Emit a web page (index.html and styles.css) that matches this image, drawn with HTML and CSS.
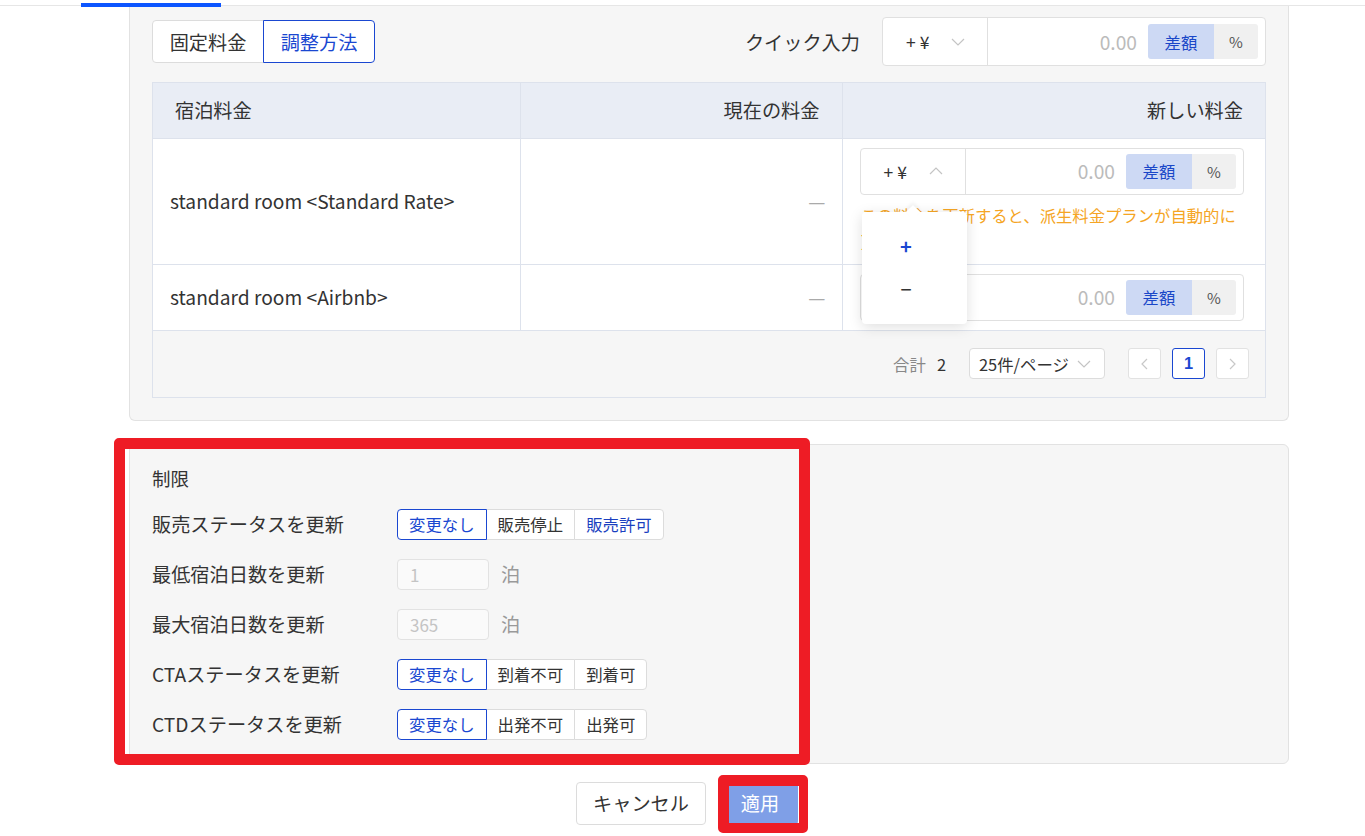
FILE: index.html
```html
<!DOCTYPE html>
<html lang="ja">
<head>
    <meta charset="UTF-8">
    <meta name="viewport" content="width=device-width, initial-scale=1.0">
    <title>料金の一括編集</title>
    <link rel="stylesheet" href="styles.css">
</head>
<body>
    <div class="topnav"><span class="topnav-ink"></span></div>

    <div class="page">
        <!-- Rates -->
        <section class="card card-rates">
            <div class="toolbar">
                <div class="seg seg-lg">
                    <button class="seg-item">固定料金</button>
                    <button class="seg-item is-active">調整方法</button>
                </div>
                <div class="quick">
                    <span class="quick-label">クイック入力</span>
                    <div class="adjust adjust-quick">
                        <div class="adjust-sign">
                            <span>+ ¥</span>
                            <svg class="chev" width="14" height="8" viewBox="0 0 14 8"><polyline points="1,1 7,7 13,1" fill="none" stroke="#c4c4c4" stroke-width="1.2"/></svg>
                        </div>
                        <div class="adjust-value">0.00</div>
                        <div class="unit">
                            <span class="unit-diff">差額</span>
                            <span class="unit-pct">%</span>
                        </div>
                    </div>
                </div>
            </div>

            <div class="rate-grid">
                <table class="rate-table">
                    <colgroup>
                        <col class="col-name">
                        <col class="col-current">
                        <col class="col-new">
                    </colgroup>
                    <thead>
                        <tr>
                            <th>宿泊料金</th>
                            <th class="num">現在の料金</th>
                            <th class="num">新しい料金</th>
                        </tr>
                    </thead>
                    <tbody>
                        <tr>
                            <td class="cell-name">standard room &lt;Standard Rate&gt;</td>
                            <td class="cell-current">—</td>
                            <td class="cell-new">
                                <div class="adjust">
                                    <div class="adjust-sign">
                                        <span>+ ¥</span>
                                        <svg class="chev" width="14" height="8" viewBox="0 0 14 8"><polyline points="1,7 7,1 13,7" fill="none" stroke="#c4c4c4" stroke-width="1.2"/></svg>
                                    </div>
                                    <div class="adjust-value">0.00</div>
                                    <div class="unit">
                                        <span class="unit-diff">差額</span>
                                        <span class="unit-pct">%</span>
                                    </div>
                                    <!-- open sign menu -->
                                    <ul class="sign-menu">
                                        <li class="is-selected">+</li>
                                        <li>−</li>
                                    </ul>
                                </div>
                                <p class="warn">この料金を更新すると、派生料金プランが自動的に更新されます。</p>
                            </td>
                        </tr>
                        <tr>
                            <td class="cell-name">standard room &lt;Airbnb&gt;</td>
                            <td class="cell-current">—</td>
                            <td class="cell-new">
                                <div class="adjust">
                                    <div class="adjust-sign">
                                        <span>+ ¥</span>
                                        <svg class="chev" width="14" height="8" viewBox="0 0 14 8"><polyline points="1,1 7,7 13,1" fill="none" stroke="#c4c4c4" stroke-width="1.2"/></svg>
                                    </div>
                                    <div class="adjust-value">0.00</div>
                                    <div class="unit">
                                        <span class="unit-diff">差額</span>
                                        <span class="unit-pct">%</span>
                                    </div>
                                </div>
                            </td>
                        </tr>
                    </tbody>
                </table>

                <div class="pager">
                    <span class="pager-total">合計</span>
                    <span class="pager-count">2</span>
                    <div class="pager-size">
                        <span>25件/ページ</span>
                        <svg width="14" height="8" viewBox="0 0 14 8"><polyline points="1,1 7,7 13,1" fill="none" stroke="#c4c4c4" stroke-width="1.2"/></svg>
                    </div>
                    <button class="pager-btn">
                        <svg width="7" height="12" viewBox="0 0 7 12"><polyline points="6,1 1,6 6,11" fill="none" stroke="#c8c8c8" stroke-width="1.2"/></svg>
                    </button>
                    <button class="pager-btn is-current">1</button>
                    <button class="pager-btn">
                        <svg width="7" height="12" viewBox="0 0 7 12"><polyline points="1,1 6,6 1,11" fill="none" stroke="#c8c8c8" stroke-width="1.2"/></svg>
                    </button>
                </div>
            </div>
        </section>

        <!-- Restrictions -->
        <section class="card card-limits">
            <h3 class="card-title">制限</h3>
            <div class="limits">
                <div class="limit-row">
                    <span class="limit-label">販売ステータスを更新</span>
                    <div class="seg seg-sm">
                        <button class="seg-item is-active">変更なし</button>
                        <button class="seg-item">販売停止</button>
                        <button class="seg-item is-blue">販売許可</button>
                    </div>
                </div>
                <div class="limit-row">
                    <span class="limit-label">最低宿泊日数を更新</span>
                    <input class="nights" type="text" placeholder="1" disabled>
                    <span class="nights-unit">泊</span>
                </div>
                <div class="limit-row">
                    <span class="limit-label">最大宿泊日数を更新</span>
                    <input class="nights" type="text" placeholder="365" disabled>
                    <span class="nights-unit">泊</span>
                </div>
                <div class="limit-row">
                    <span class="limit-label">CTAステータスを更新</span>
                    <div class="seg seg-sm">
                        <button class="seg-item is-active">変更なし</button>
                        <button class="seg-item">到着不可</button>
                        <button class="seg-item">到着可</button>
                    </div>
                </div>
                <div class="limit-row">
                    <span class="limit-label">CTDステータスを更新</span>
                    <div class="seg seg-sm">
                        <button class="seg-item is-active">変更なし</button>
                        <button class="seg-item">出発不可</button>
                        <button class="seg-item">出発可</button>
                    </div>
                </div>
            </div>
        </section>
    </div>

    <div class="actions">
        <button class="btn btn-cancel">キャンセル</button>
        <button class="btn btn-apply" disabled>適用</button>
    </div>

    <!-- review markers -->
    <div class="mark mark-limits"></div>
    <div class="mark mark-apply"></div>
</body>
</html>
```

FILE: styles.css
```css
* {
    box-sizing: border-box;
}
body {
    margin: 0;
    background: #fff;
    color: #333;
    font-family: "Noto Sans CJK JP", "Noto Sans", sans-serif;
    font-size: 19.2px;
}
button {
    font-family: inherit;
    cursor: pointer;
}
.topnav {
    position: relative;
    height: 6px;
    border-bottom: 1px solid #e6e6e6;
}
.topnav-ink {
    position: absolute;
    left: 81px;
    top: 3px;
    width: 140px;
    height: 4px;
    background: #0c55ff;
}
.page {
    width: 1160px;
    margin-left: 129px;
}
.card {
    background: #f6f6f6;
    border: 1px solid #e2e2e2;
    border-radius: 6px;
}
.card-rates {
    border-top: 0;
    border-radius: 0 0 6px 6px;
    padding: 11px 22px 22px;
}

/* toolbar */
.toolbar {
    display: flex;
    align-items: center;
    justify-content: space-between;
    height: 49px;
}
.seg {
    display: flex;
}
.seg-item {
    background: #fff;
    border: 1px solid #dcdcdc;
    color: #333;
    padding: 0;
    margin-left: -1px;
}
.seg-item:first-child {
    margin-left: 0;
    border-radius: 4px 0 0 4px;
}
.seg-item:last-child {
    border-radius: 0 4px 4px 0;
}
.seg-item.is-active {
    border-color: #1a47d1;
    color: #1a47d1;
    position: relative;
}
.seg-item.is-blue {
    color: #1a3fc0;
}
.seg-lg .seg-item {
    height: 43px;
    width: 112px;
    font-size: 19.2px;
}
.quick {
    display: flex;
    align-items: center;
}
.quick-label {
    margin-right: 22px;
}

/* sign + amount + unit group */
.adjust {
    position: relative;
    display: flex;
    align-items: center;
    height: 47px;
    background: #fff;
    border: 1px solid #e0e0e0;
    border-radius: 4px;
}
.adjust-quick {
    width: 384px;
    height: 49px;
}
.adjust-sign {
    display: flex;
    align-items: center;
    width: 105px;
    height: 100%;
    padding-left: 23px;
    border-right: 1px solid #e0e0e0;
    font-size: 17.5px;
}
.adjust-sign .chev {
    margin-left: 22px;
}
.adjust-value {
    flex: 1;
    text-align: right;
    color: #bbb;
    padding-right: 11px;
}
.unit {
    display: flex;
    height: 35px;
    margin-right: 7px;
    border-radius: 3px;
    overflow: hidden;
}
.unit span {
    display: flex;
    align-items: center;
    justify-content: center;
}
.unit-diff {
    width: 66px;
    background: #cdd9f4;
    color: #1a47c8;
    font-size: 16.4px;
}
.unit-pct {
    width: 44px;
    background: #f0f0f0;
    color: #555;
    font-size: 15px;
}
.sign-menu {
    position: absolute;
    z-index: 2;
    left: 1px;
    top: calc(100% + 18px);
    width: 105px;
    margin: 0;
    padding: 12px 16px 14px 0;
    list-style: none;
    background: #fff;
    border-radius: 4px;
    box-shadow: 0 3px 14px rgba(0, 0, 0, 0.13);
}
.sign-menu::before {
    content: "";
    position: absolute;
    left: 46px;
    top: -5px;
    width: 10px;
    height: 10px;
    background: #fff;
    transform: rotate(45deg);
    box-shadow: -2px -2px 4px rgba(0, 0, 0, 0.05);
}
.sign-menu li {
    height: 43px;
    line-height: 43px;
    text-align: center;
    font-size: 20px;
    color: #333;
}
.sign-menu li.is-selected {
    color: #1a47d1;
    font-weight: bold;
}

/* table */
.rate-grid {
    margin-top: 16px;
    border: 1px solid #dde2ec;
    background: #fff;
}
.rate-table {
    width: 100%;
    border-collapse: collapse;
    table-layout: fixed;
}
.col-name {
    width: 367px;
}
.col-current {
    width: 322px;
}
.rate-table th {
    height: 55px;
    background: #e9edf5;
    font-weight: normal;
    text-align: left;
    padding: 0 22px;
    border-bottom: 1px solid #dde2ec;
}
.rate-table th.num {
    text-align: right;
}
.rate-table th + th,
.rate-table td + td {
    border-left: 1px solid #dde2ec;
}
.rate-table td {
    border-bottom: 1px solid #dde2ec;
    vertical-align: middle;
}
.cell-name {
    padding-left: 17px;
}
.cell-current {
    text-align: right;
    padding-right: 16px;
    color: #aaa;
}
.cell-new {
    padding: 9px 21px 9px 17px;
}
.warn {
    margin: 7px 0 1px 1px;
    font-size: 16.35px;
    line-height: 26px;
    color: #f5a524;
}

/* pager */
.pager {
    display: flex;
    align-items: center;
    justify-content: flex-end;
    height: 66px;
    padding-right: 16px;
    background: #f6f6f6;
    font-size: 16.4px;
}
.pager-total {
    color: #888;
    margin-right: 11px;
}
.pager-count {
    margin-right: 23px;
}
.pager-size {
    display: flex;
    align-items: center;
    justify-content: space-between;
    width: 136px;
    height: 31px;
    padding: 0 13px 0 9px;
    background: #fff;
    border: 1px solid #dcdcdc;
    border-radius: 4px;
    margin-right: 23px;
}
.pager-btn {
    display: flex;
    align-items: center;
    justify-content: center;
    width: 33px;
    height: 31px;
    margin-left: 11px;
    padding: 0;
    background: #fff;
    border: 1px solid #e2e2e2;
    border-radius: 3px;
    font-size: 16.4px;
}
.pager-btn:first-of-type {
    margin-left: 0;
}
.pager-btn.is-current {
    border-color: #1a47d1;
    color: #1a47d1;
    font-weight: bold;
    font-family: "Liberation Sans", sans-serif;
}

/* restrictions */
.card-limits {
    margin-top: 23px;
    padding: 21px 22px 23px;
}
.card-title {
    margin: 0 0 19px;
    font-size: 18.5px;
    font-weight: normal;
    line-height: 24px;
}
.limits {
    display: flex;
    flex-direction: column;
    gap: 19px;
}
.limit-row {
    display: flex;
    align-items: center;
    height: 31px;
}
.limit-label {
    width: 245px;
}
.seg-sm .seg-item {
    height: 31px;
    padding: 0 11px;
    font-size: 16.4px;
}
.nights {
    width: 92px;
    height: 31px;
    padding: 0 12px;
    background: #fafafa;
    border: 1px solid #e2e2e2;
    border-radius: 4px;
    font-family: inherit;
    font-size: 17px;
}
.nights::placeholder {
    color: #c4c4c4;
}
.nights-unit {
    margin-left: 12px;
    color: #999;
}

/* actions */
.actions {
    display: flex;
    gap: 16px;
    margin-top: 18px;
    padding-left: 576px;
}
.btn {
    height: 43px;
    border-radius: 4px;
    font-size: 19.2px;
}
.btn-cancel {
    width: 130px;
    background: #fff;
    border: 1px solid #dcdcdc;
    color: #333;
}
.btn-apply {
    width: 76px;
    background: #7f9fe7;
    border: none;
    color: #fff;
}

/* red review markers drawn over the page */
.mark {
    position: absolute;
    border: 11px solid #ee1c25;
    border-radius: 5px;
}
.mark-limits {
    left: 114px;
    top: 438px;
    width: 696px;
    height: 327px;
}
.mark-apply {
    left: 718px;
    top: 775px;
    width: 90px;
    height: 58px;
    border-width: 11px 9px 10px 11px;
}
```
